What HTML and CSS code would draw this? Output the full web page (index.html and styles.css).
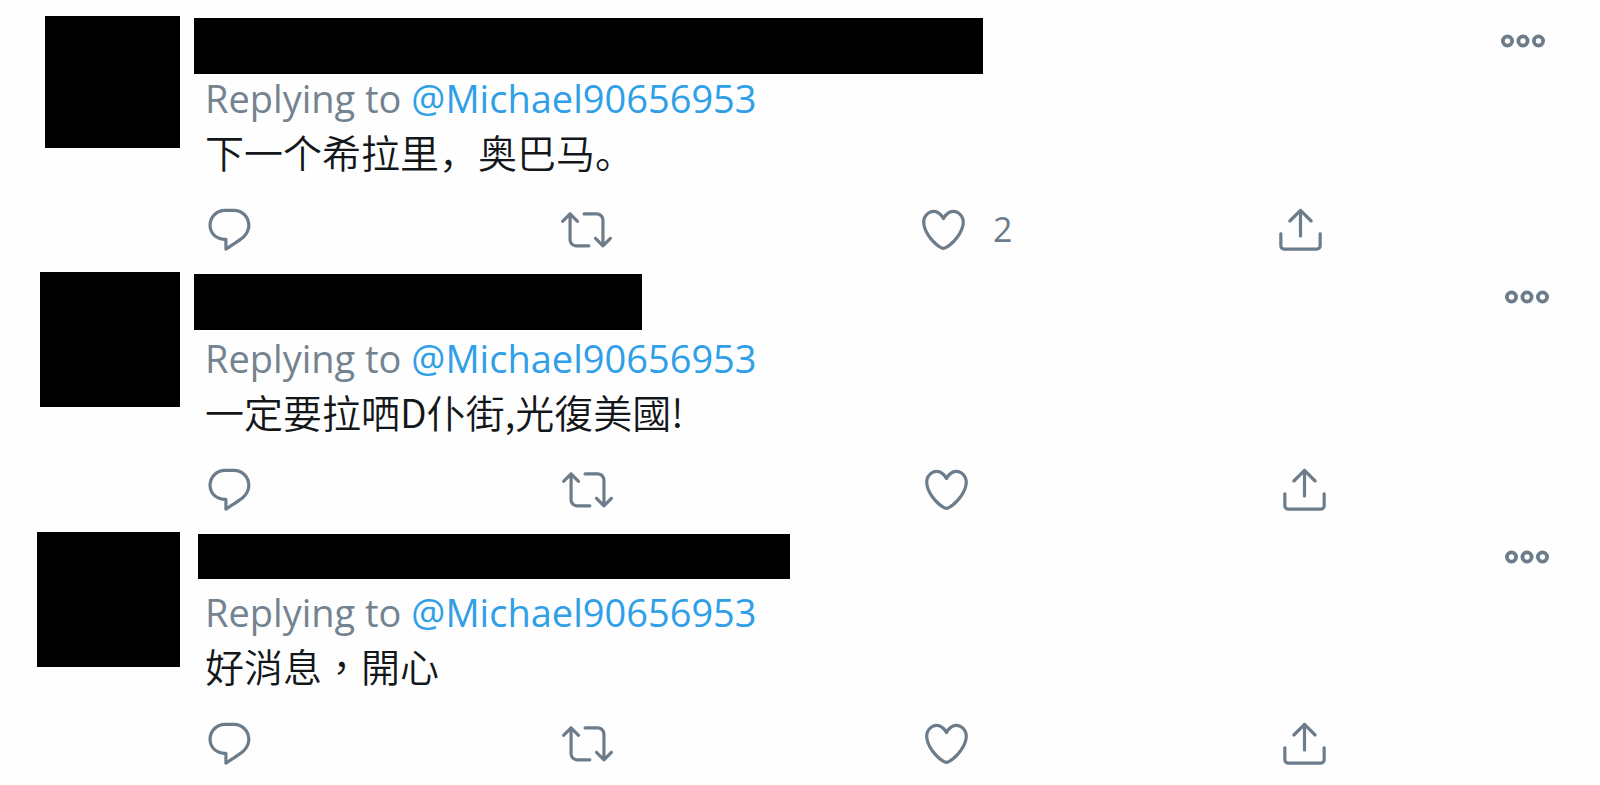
FILE: index.html
```html
<!DOCTYPE html>
<html lang="en">
<head>
    <meta charset="UTF-8">
    <meta name="viewport" content="width=device-width, initial-scale=1.0">
    <title>Replies</title>
    <link rel="stylesheet" href="styles.css">
</head>
<body>
    <!-- Shared icons -->
    <svg class="sprite" aria-hidden="true">
        <symbol id="icon-reply" viewBox="0 0 24 24">
            <path d="M14.046 2.242l-4.148-.01h-.002c-4.374 0-7.8 3.427-7.8 7.802 0 4.098 3.186 7.206 7.465 7.37v3.828c0 .108.044.286.12.403.142.225.384.347.632.347.138 0 .277-.038.402-.118.264-.168 6.473-4.14 8.088-5.506 1.902-1.61 3.04-3.97 3.043-6.312v-.017c-.006-4.367-3.43-7.787-7.8-7.788zm3.787 12.972c-1.134.96-4.862 3.405-6.772 4.643V16.67c0-.414-.335-.75-.75-.75h-.396c-3.66 0-6.318-2.476-6.318-5.886 0-3.534 2.768-6.302 6.3-6.302l4.147.01h.002c3.532 0 6.3 2.766 6.302 6.296-.003 1.91-.942 3.844-2.514 5.176z"/>
        </symbol>
        <symbol id="icon-retweet" viewBox="0 0 24 24">
            <path d="M23.77 15.67c-.292-.293-.767-.293-1.06 0l-2.22 2.22V7.65c0-2.068-1.683-3.75-3.75-3.75h-5.85c-.414 0-.75.336-.75.75s.336.75.75.75h5.85c1.24 0 2.25 1.01 2.25 2.25v10.24l-2.22-2.22c-.293-.293-.768-.293-1.06 0s-.294.768 0 1.06l3.5 3.5c.145.147.337.22.53.22s.383-.072.53-.22l3.5-3.5c.294-.292.294-.767 0-1.06zm-10.66 3.28H7.26c-1.24 0-2.25-1.01-2.25-2.25V6.46l2.22 2.22c.148.147.34.22.532.22s.384-.073.53-.22c.293-.293.293-.768 0-1.06l-3.5-3.5c-.293-.294-.768-.294-1.06 0l-3.5 3.5c-.294.292-.294.767 0 1.06s.767.293 1.06 0l2.22-2.22V16.7c0 2.068 1.683 3.75 3.75 3.75h5.85c.414 0 .75-.336.75-.75s-.337-.75-.75-.75z"/>
        </symbol>
        <symbol id="icon-like" viewBox="0 0 24 24">
            <path d="M12 21.638h-.014C9.403 21.59 1.95 14.856 1.95 8.478c0-3.064 2.525-5.754 5.403-5.754 2.29 0 3.83 1.58 4.646 2.73.814-1.148 2.354-2.73 4.645-2.73 2.88 0 5.404 2.69 5.404 5.755 0 6.376-7.454 13.11-10.037 13.157H12zM7.354 4.225c-2.08 0-3.903 1.988-3.903 4.255 0 5.74 7.034 11.596 8.55 11.658 1.518-.062 8.55-5.917 8.55-11.658 0-2.267-1.823-4.255-3.903-4.255-2.528 0-3.94 2.936-3.952 2.965-.23.562-1.156.562-1.387 0-.014-.03-1.425-2.965-3.954-2.965z"/>
        </symbol>
        <symbol id="icon-share" viewBox="0 0 24 24">
            <path d="M17.53 7.47l-5-5c-.293-.293-.768-.293-1.06 0l-5 5c-.294.293-.294.768 0 1.06s.767.294 1.06 0l3.72-3.72V15c0 .414.336.75.75.75s.75-.336.75-.75V4.81l3.72 3.72c.146.147.338.22.53.22s.384-.072.53-.22c.293-.293.293-.767 0-1.06z"/>
            <path d="M19.708 21.944H4.292C3.028 21.944 2 20.916 2 19.652V14c0-.414.336-.75.75-.75s.75.336.75.75v5.652c0 .437.355.792.792.792h15.416c.437 0 .792-.355.792-.792V14c0-.414.336-.75.75-.75s.75.336.75.75v5.652c0 1.264-1.028 2.292-2.292 2.292z"/>
        </symbol>
        <symbol id="icon-more" viewBox="0 0 46 16">
            <g fill="none" stroke="currentColor" stroke-width="3.8">
                <circle cx="7.5" cy="8" r="4.6"/>
                <circle cx="23" cy="8" r="4.6"/>
                <circle cx="38.5" cy="8" r="4.6"/>
            </g>
        </symbol>
    </svg>

    <main class="replies">
        <article class="tweet tweet-first">
            <div class="avatar"></div>
            <div class="tweet-body">
                <div class="tweet-head">
                    <div class="name"></div>
                    <button class="more" type="button" aria-label="More"><svg><use href="#icon-more"/></svg></button>
                </div>
                <p class="replying">Replying to <a href="#">@Michael90656953</a></p>
                <p class="text" lang="zh-Hans">下一个希拉里，奥巴马。</p>
                <div class="actions">
                    <button type="button" aria-label="Reply"><svg><use href="#icon-reply"/></svg></button>
                    <button type="button" aria-label="Retweet"><svg><use href="#icon-retweet"/></svg></button>
                    <button type="button" aria-label="Like"><svg><use href="#icon-like"/></svg><span>2</span></button>
                    <button type="button" aria-label="Share"><svg><use href="#icon-share"/></svg></button>
                </div>
            </div>
        </article>

        <article class="tweet tweet-second">
            <div class="avatar"></div>
            <div class="tweet-body">
                <div class="tweet-head">
                    <div class="name"></div>
                    <button class="more" type="button" aria-label="More"><svg><use href="#icon-more"/></svg></button>
                </div>
                <p class="replying">Replying to <a href="#">@Michael90656953</a></p>
                <p class="text" lang="zh-Hant">一定要拉哂D仆街,光復美國!</p>
                <div class="actions">
                    <button type="button" aria-label="Reply"><svg><use href="#icon-reply"/></svg></button>
                    <button type="button" aria-label="Retweet"><svg><use href="#icon-retweet"/></svg></button>
                    <button type="button" aria-label="Like"><svg><use href="#icon-like"/></svg></button>
                    <button type="button" aria-label="Share"><svg><use href="#icon-share"/></svg></button>
                </div>
            </div>
        </article>

        <article class="tweet tweet-third">
            <div class="avatar"></div>
            <div class="tweet-body">
                <div class="tweet-head">
                    <div class="name"></div>
                    <button class="more" type="button" aria-label="More"><svg><use href="#icon-more"/></svg></button>
                </div>
                <p class="replying">Replying to <a href="#">@Michael90656953</a></p>
                <p class="text" lang="zh-Hant">好消息，開心</p>
                <div class="actions">
                    <button type="button" aria-label="Reply"><svg><use href="#icon-reply"/></svg></button>
                    <button type="button" aria-label="Retweet"><svg><use href="#icon-retweet"/></svg></button>
                    <button type="button" aria-label="Like"><svg><use href="#icon-like"/></svg></button>
                    <button type="button" aria-label="Share"><svg><use href="#icon-share"/></svg></button>
                </div>
            </div>
        </article>
    </main>
</body>
</html>
```
FILE: styles.css
```css
* {
    box-sizing: border-box;
}
body {
    margin: 0;
    background: #fefefe;
    color: #14171a;
    font-family: "Open Sans", "Noto Sans CJK SC", sans-serif;
}
p {
    margin: 0;
}
button {
    padding: 0;
    border: none;
    background: none;
    color: #6c7c8a;
    font-family: inherit;
    cursor: pointer;
}
svg {
    display: block;
    fill: currentColor;
}
.sprite {
    display: none;
}
.replies {
    padding-top: 16px;
}
.tweet {
    display: grid;
    grid-template-columns: 180px 1fr;
    column-gap: 14px;
    padding-right: 50px;
    padding-bottom: 17px;
}
.tweet:last-child {
    padding-bottom: 0;
}
.avatar {
    justify-self: end;
    width: 140px;
    height: 135px;
    background: #000;
}
.tweet-head {
    display: flex;
    justify-content: space-between;
    align-items: flex-start;
    height: 55px;
    padding-top: 2px;
}
.name {
    height: 56px;
    background: #000;
}
.more {
    padding: 15px 0;
}
.more svg {
    width: 46px;
    height: 16px;
}
.replying {
    padding-left: 11px;
    color: #748390;
    font-size: 38px;
    line-height: 54px;
}
.replying a {
    color: #2f9fe8;
    text-decoration: none;
}
.text {
    padding-left: 11px;
    font-family: "Noto Sans CJK SC", sans-serif;
    font-size: 39px;
    font-weight: 350;
    line-height: 52px;
}
.text:lang(zh-Hant) {
    font-family: "Noto Sans CJK TC", sans-serif;
}
.actions {
    display: grid;
    grid-template-columns: repeat(3, 1fr) auto;
    margin-top: 27px;
    padding-left: 10px;
    padding-right: 220px;
}
.actions button {
    display: flex;
    align-items: center;
    gap: 24px;
    font-size: 34px;
    line-height: 51px;
}
.actions svg {
    width: 51px;
    height: 51px;
}

/* Hidden names and avatars have their own sizes */
.tweet-first {
    padding-right: 54px;
}
.tweet-first .avatar {
    width: 135px;
    height: 132px;
}
.tweet-first .name {
    width: 789px;
}
.tweet-second .tweet-head {
    height: 59px;
}
.tweet-second .name {
    width: 448px;
}
.tweet-third .tweet-head {
    height: 53px;
}
.tweet-third .avatar {
    width: 143px;
}
.tweet-third .name {
    width: 592px;
    height: 45px;
    margin-left: 4px;
}
```
